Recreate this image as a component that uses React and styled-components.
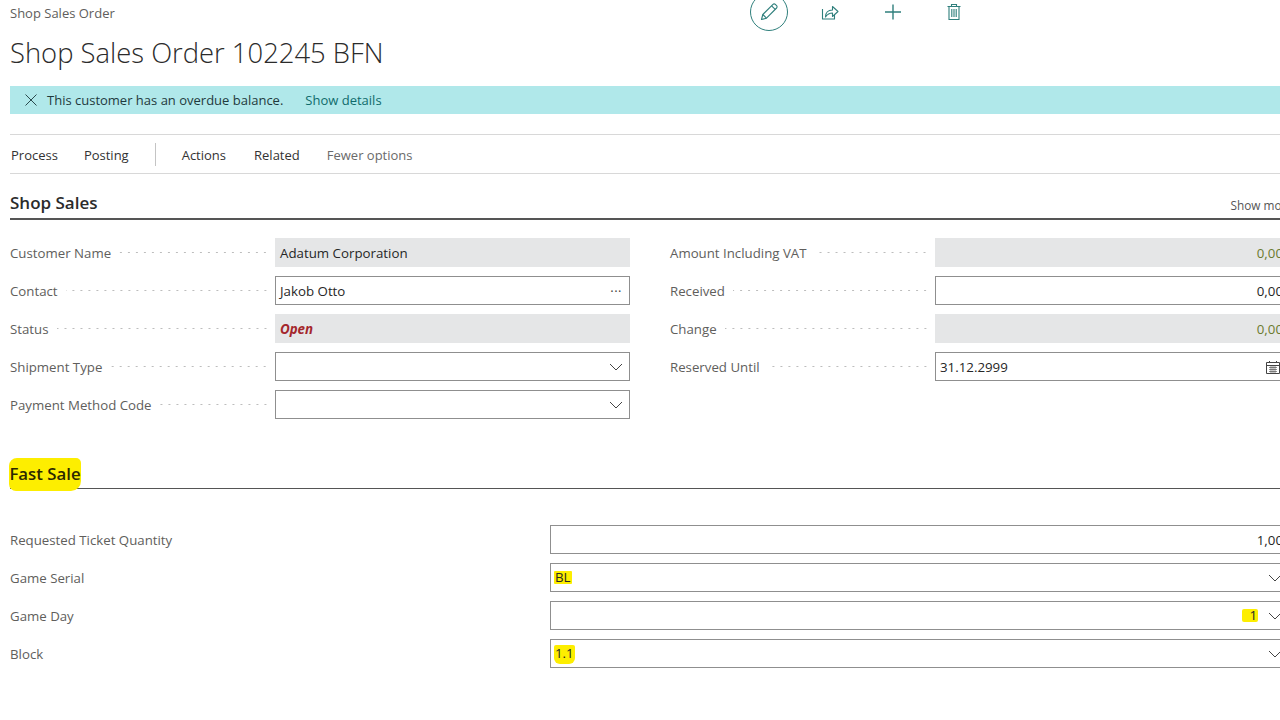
import React from "react";
import styled, { createGlobalStyle } from "styled-components";

const Global = createGlobalStyle`
  html, body { margin: 0; padding: 0; background: #fff; overflow: hidden; width: 1280px; height: 720px; }
  body { font-family: "Open Sans", "Noto Sans", "Liberation Sans", sans-serif; color: #212121; }
`;

const Page = styled.div`
  width: 1280px; height: 720px; overflow: hidden; background: #fff;
`;
const Content = styled.div`
  width: 1280px; margin-left: 10px;
`;
const HeaderTop = styled.div`
  display: flex; height: 26px; align-items: flex-start;
`;
const Breadcrumb = styled.div`
  font-size: 13px; line-height: 27px; color: #605e5c; width: 740px;
`;
const ActionBar = styled.div`
  display: flex; align-items: center; margin-top: -7px; height: 38px;
`;
const EditCircle = styled.div`
  width: 38px; height: 38px; box-sizing: border-box; border: 1px solid #2f7f7c; border-radius: 50%;
  display: flex; align-items: center; justify-content: center;
`;
const ActionIcon = styled.div`
  display: flex; align-items: center; justify-content: center; width: 24px; height: 24px;
  margin-left: ${p => p.$gap}px;
`;
const Title = styled.h1`
  margin: 0; font-weight: 300; font-size: 27.4px; line-height: 54px; height: 60px; color: #2b2b2b; white-space: nowrap;
`;
const Banner = styled.div`
  display: flex; align-items: center; height: 28px; background: #b0e8ea; padding-left: 15px; font-size: 13px; color: #1f3a3d;
`;
const BannerLink = styled.span`
  margin-left: 22px; color: #0f6b6b;
`;
const CloseIcon = styled.svg`
  width: 12px; height: 12px; margin-right: 10px; flex: none;
`;
const Menu = styled.div`
  display: flex; align-items: center; height: 36px; padding-top: 2px; margin-top: 20px;
  border-top: 1px solid #d8d8d8; border-bottom: 1px solid #d8d8d8; font-size: 13px; color: #333;
`;
const MenuItem = styled.span`
  margin-left: ${p => p.$gap}px; color: ${p => p.$muted ? "#6a6a6a" : "#333"};
`;
const MenuDivider = styled.span`
  width: 1px; height: 23px; margin-top: -2px; background: #c4c4c4; margin-left: 26px;
`;
const SectionHead = styled.div`
  display: flex; justify-content: space-between; align-items: flex-end;
  height: ${p => p.$h}px; border-bottom: ${p => p.$thick ? "2px solid #555" : "1px solid #555"};
  margin-top: ${p => p.$top}px; width: 1280px; box-sizing: border-box;
`;
const SectionTitle = styled.h2`
  margin: 0; font-size: 17px; font-weight: 600; line-height: 30px; color: #2b2b2b;
`;
const ShowMore = styled.span`
  font-size: 11.8px; color: #555; line-height: 16px; padding-bottom: 5px; margin-right: -3px; white-space: nowrap;
`;
const Columns = styled.div`
  display: grid; grid-template-columns: 620px 620px; column-gap: 40px; margin-top: 18px;
`;
const Column = styled.div`
  display: flex; flex-direction: column; gap: 9px;
`;
const Row = styled.div`
  display: grid; grid-template-columns: ${p => p.$label}px 1fr; height: 29px; align-items: center;
`;
const LabelWrap = styled.div`
  display: flex; align-items: center; padding-right: 6px; min-width: 0;
`;
const Label = styled.span`
  font-size: 13.25px; color: #605e5c; white-space: nowrap;
`;
const Dots = styled.span`
  flex: 1; height: 3px; margin-left: 8px;
  background-image: radial-gradient(circle, #bdbdbd 0.8px, transparent 1.1px);
  background-size: 8px 3px; background-position: right center;
`;
const Field = styled.div`
  height: 29px; box-sizing: border-box; display: flex; align-items: center;
  padding: 0 ${p => p.$right ? 6 : 4}px 0 4px;
  justify-content: ${p => p.$right ? "flex-end" : "flex-start"};
  font-size: 13.3px; color: ${p => p.$color || "#262626"};
  background: ${p => p.$readonly ? "#e5e6e7" : "#fff"};
  border: ${p => p.$readonly ? "1px solid #e5e6e7" : "1px solid #8f8f8f"};
`;
const Spacer = styled.span`flex: 1;`;
const OpenText = styled.span`
  color: #a4262c; font-weight: 700; font-style: italic;
`;
const Ellipsis = styled.span`
  font-size: 13px; line-height: 13px; color: #444; margin-right: 3px; margin-top: -6px; letter-spacing: 0.5px;
`;
const Chevron = styled.svg`
  width: 14px; height: 8px; flex: none; margin-right: ${p => p.$mr ?? 3}px;
`;
const CalendarIcon = styled.svg`
  width: 14px; height: 14px; flex: none; margin-right: 5px;
`;
const Marker = styled.span`
  background: #fdee00; display: inline-block; line-height: 1;
  padding: ${p => p.$pad}; border-radius: ${p => p.$r};
  margin: ${p => p.$m || 0};
`;
const FastTitle = styled.h2`
  margin: 0 0 -3px -1px; font-size: 16.8px; font-weight: 600; line-height: 32px; height: 33px; color: #2b2800;
  background: #fdee00; width: 72px; border-radius: 8px 5px 10px 7px; text-align: center; white-space: nowrap;
`;
const FastRows = styled.div`
  display: flex; flex-direction: column; gap: 9px; margin-top: 36px;
`;

const Chev = ({ mr }) => (
  <Chevron viewBox="0 0 14 8" $mr={mr}><path d="M1 1l6 6 6-6" fill="none" stroke="#444" strokeWidth="1" /></Chevron>
);

const DotLabel = ({ children }) => (
  <LabelWrap><Label>{children}</Label><Dots /></LabelWrap>
);

const TEAL = "#2f7f7c";

export default function App() {
  return (
    <Page>
      <Global />
      <Content>
        <HeaderTop>
          <Breadcrumb>Shop Sales Order</Breadcrumb>
          <ActionBar>
            <EditCircle>
              <svg width="20" height="20" viewBox="0 0 20 20" fill="none" stroke={TEAL} strokeWidth="1.1" strokeLinejoin="round">
                <path d="M2.5 17.5l1.3-5L14 2.4a1.6 1.6 0 0 1 2.3 0l1.3 1.3a1.6 1.6 0 0 1 0 2.3L7.5 16.2z" />
                <path d="M3.8 12.5l3.7 3.7M12.6 3.8l3.6 3.6" />
              </svg>
            </EditCircle>
            <ActionIcon $gap={30}>
              <svg width="18" height="18" viewBox="0 0 18 18" fill="none" stroke={TEAL} strokeWidth="1.1" strokeLinejoin="round">
                <path d="M1.500 6v10h12v-4" />
                <path d="M4.500 14c0-4 2.500-7 7-7V3.500l5.500 5-5.500 5V10c-3 0-5 1-7 4z" />
              </svg>
            </ActionIcon>
            <ActionIcon $gap={39}>
              <svg width="18" height="18" viewBox="0 0 18 18" stroke={TEAL} strokeWidth="1.4" fill="none">
                <path d="M9 1.500v15M1 9h16" />
              </svg>
            </ActionIcon>
            <ActionIcon $gap={37}>
              <svg width="16" height="18" viewBox="0 0 16 18" stroke={TEAL} strokeWidth="1.1" fill="none">
                <path d="M1.500 3.500h13M5.500 3.500V1.500h5v2M3 3.500v13h10v-13M5.800 6v8M8 6v8M10.200 6v8" />
              </svg>
            </ActionIcon>
          </ActionBar>
        </HeaderTop>
        <Title>Shop Sales Order 102245 BFN</Title>
        <Banner>
          <CloseIcon viewBox="0 0 12 12"><path d="M.5.500l11 11M11.500.500l-11 11" stroke="#2a4a4d" strokeWidth="1" fill="none" /></CloseIcon>
          This customer has an overdue balance.
          <BannerLink>Show details</BannerLink>
        </Banner>
        <Menu>
          <MenuItem $gap={1}>Process</MenuItem>
          <MenuItem $gap={26}>Posting</MenuItem>
          <MenuDivider />
          <MenuItem $gap={26}>Actions</MenuItem>
          <MenuItem $gap={28}>Related</MenuItem>
          <MenuItem $gap={27} $muted>Fewer options</MenuItem>
        </Menu>
        <SectionHead $h={46} $thick $top={0}>
          <SectionTitle>Shop Sales</SectionTitle>
          <ShowMore>Show more</ShowMore>
        </SectionHead>
        <Columns>
          <Column>
            <Row $label={265}><DotLabel>Customer Name</DotLabel><Field $readonly>Adatum Corporation</Field></Row>
            <Row $label={265}><DotLabel>Contact</DotLabel><Field>Jakob Otto<Spacer /><Ellipsis>...</Ellipsis></Field></Row>
            <Row $label={265}><DotLabel>Status</DotLabel><Field $readonly><OpenText>Open</OpenText></Field></Row>
            <Row $label={265}><DotLabel>Shipment Type</DotLabel><Field><Spacer /><Chev mr={2} /></Field></Row>
            <Row $label={265}><DotLabel>Payment Method Code</DotLabel><Field><Spacer /><Chev mr={2} /></Field></Row>
          </Column>
          <Column>
            <Row $label={265}><DotLabel>Amount Including VAT</DotLabel><Field $readonly $right $color="#6b7a2e">0,00</Field></Row>
            <Row $label={265}><DotLabel>Received</DotLabel><Field $right>0,00</Field></Row>
            <Row $label={265}><DotLabel>Change</DotLabel><Field $readonly $right $color="#6b7a2e">0,00</Field></Row>
            <Row $label={265}><DotLabel>Reserved Until</DotLabel>
              <Field>31.12.2999<Spacer />
                <CalendarIcon viewBox="0 0 14 14" fill="none" stroke="#444" strokeWidth="1">
                  <path d="M.5 2.500h13v11H.5zM.5 5.500h13M3.500 1v2M10.500 1v2" />
                  <path d="M3 7.500h8M3 9.500h8M3 11.500h8M5 6v7M7 6v7M9 6v7" strokeWidth="0.6" />
                </CalendarIcon>
              </Field>
            </Row>
          </Column>
        </Columns>
        <SectionHead $h={60} $top={10}>
          <FastTitle>Fast Sale</FastTitle>
        </SectionHead>
        <FastRows>
          <Row $label={540}><Label>Requested Ticket Quantity</Label><Field $right>1,00</Field></Row>
          <Row $label={540}><Label>Game Serial</Label><Field><Marker $pad="0 1px" $r="1px" $m="0 0 0 -1px">BL</Marker><Spacer /><Chev /></Field></Row>
          <Row $label={540}><Label>Game Day</Label><Field><Spacer /><Marker $pad="0 1px 0 7px" $r="2px" $m="0 10px 0 0">1</Marker><Chev /></Field></Row>
          <Row $label={540}><Label>Block</Label><Field><Marker $pad="2px 1px 3px" $r="2px 2px 6px 6px" $m="2px 0 0 -1px">1.1</Marker><Spacer /><Chev /></Field></Row>
        </FastRows>
      </Content>
    </Page>
  );
}
